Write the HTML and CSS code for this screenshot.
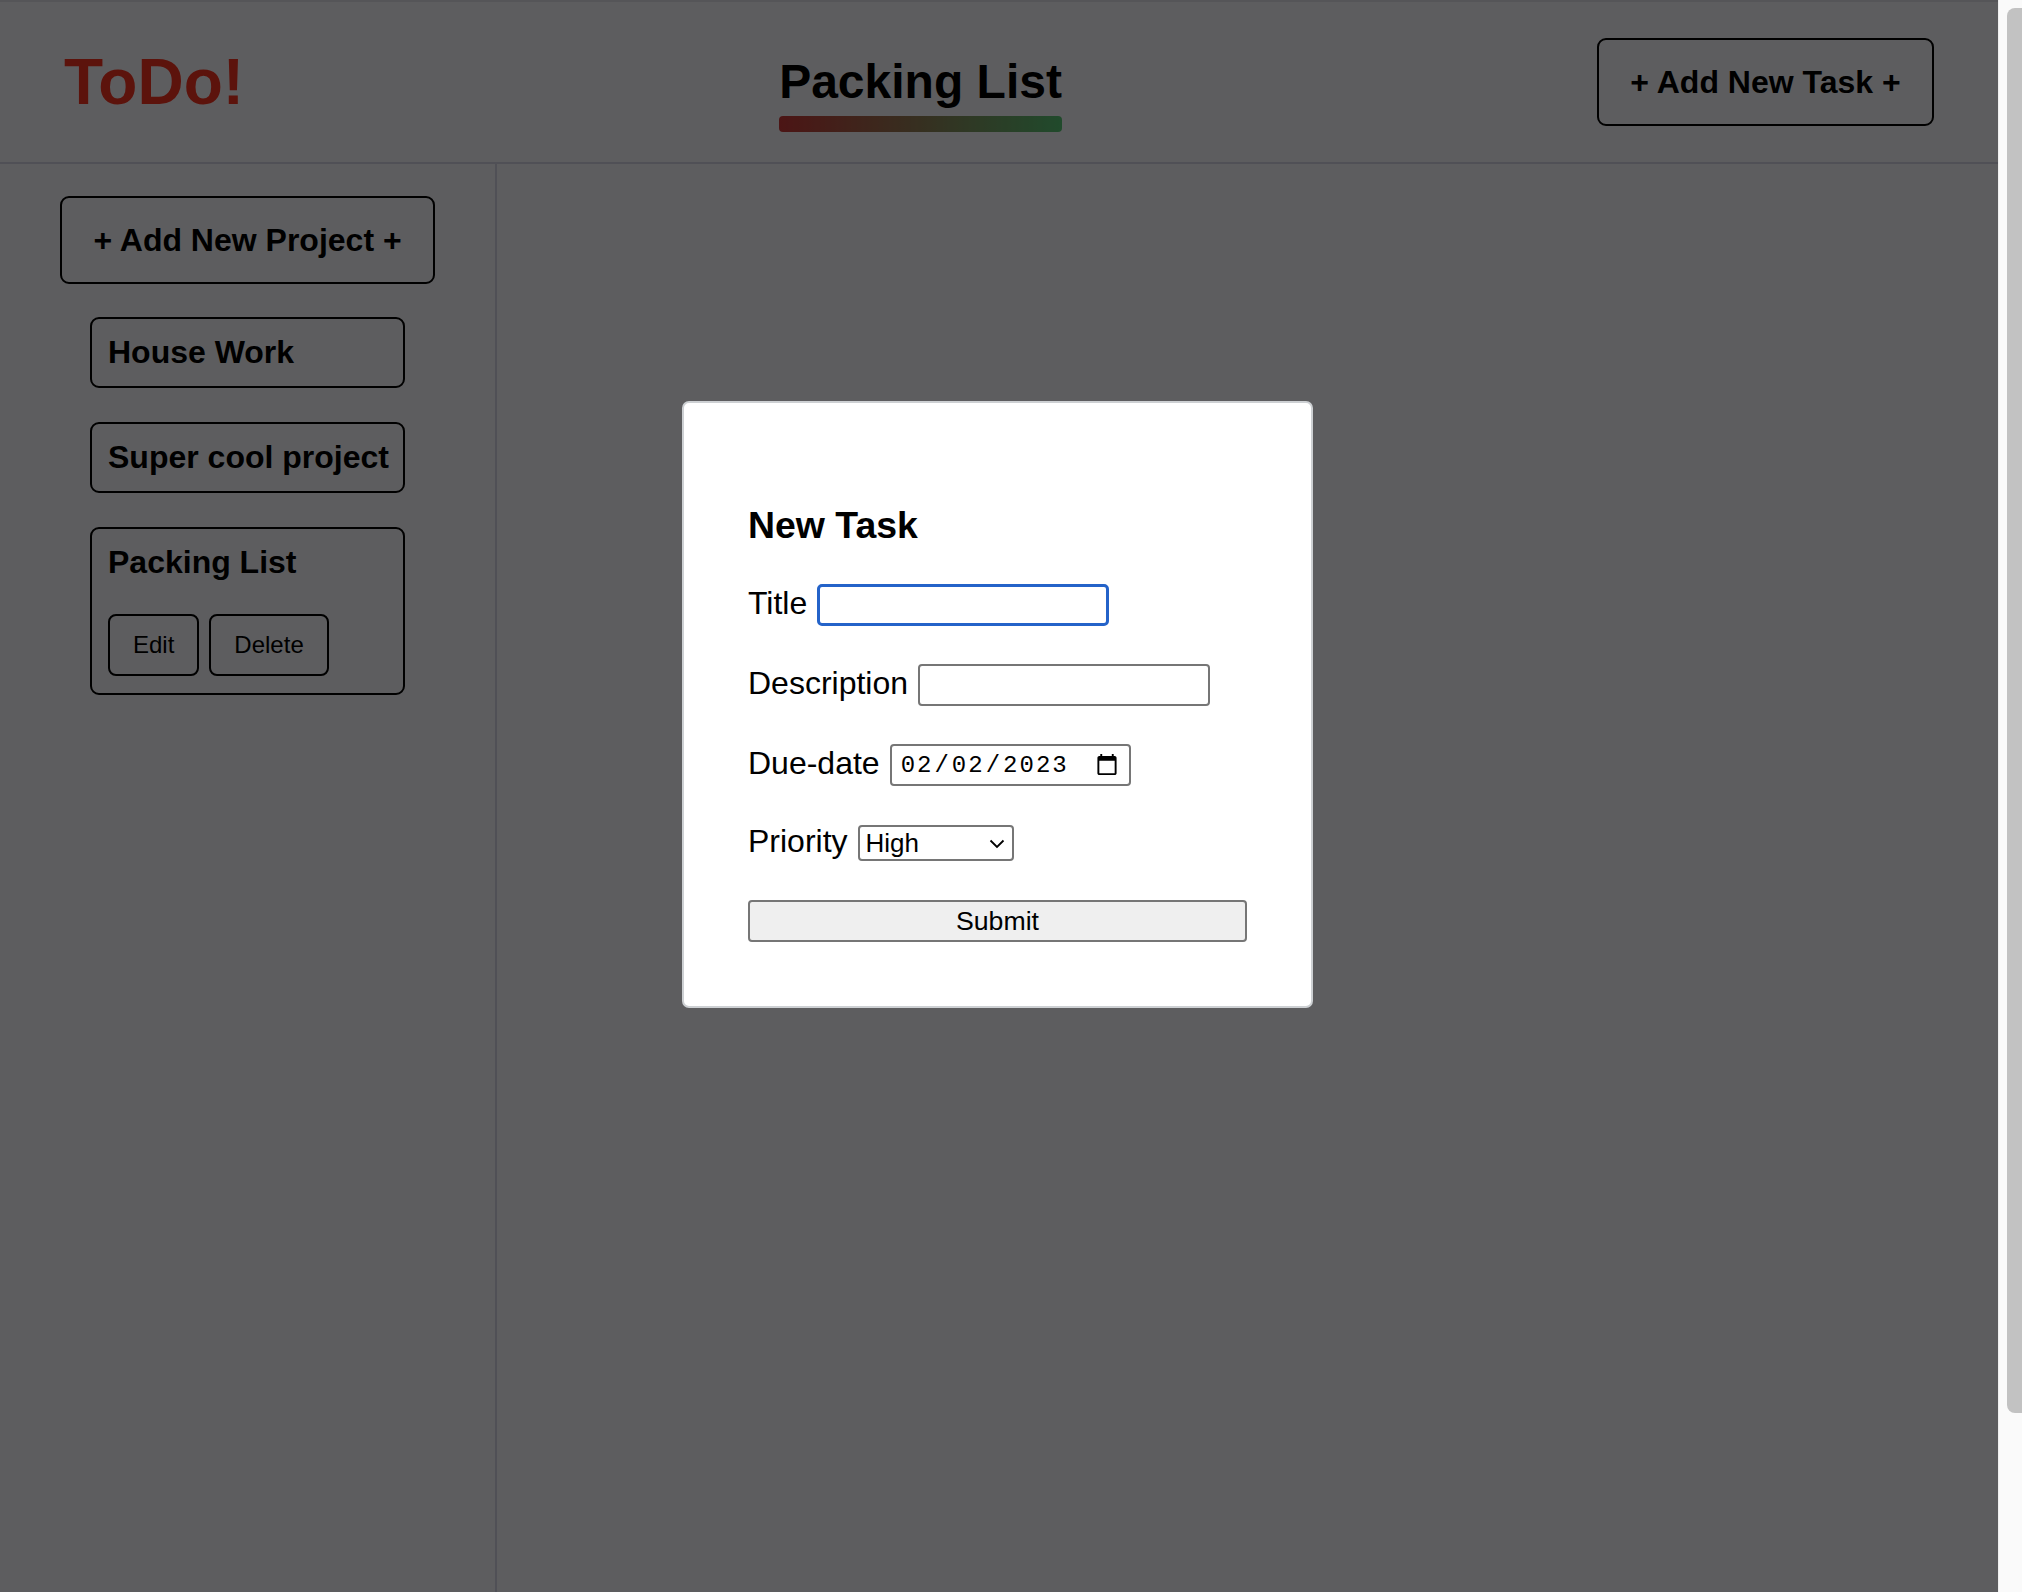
FILE: index.html
```html
<!DOCTYPE html>
<html lang="en">
<head>
    <meta charset="UTF-8">
    <meta name="viewport" content="width=device-width, initial-scale=1.0">
    <title>ToDo!</title>
    <link rel="stylesheet" href="styles.css">
</head>
<body>

    <div class="app">
        <header class="topbar">
            <h1 class="logo">ToDo!</h1>
            <div class="project-title">
                <h2>Packing List</h2>
                <div class="title-bar"></div>
            </div>
            <button class="add-task">+ Add New Task +</button>
        </header>

        <div class="content">
            <aside class="sidebar">
                <button class="add-project">+ Add New Project +</button>
                <div class="project">
                    <h3>House Work</h3>
                </div>
                <div class="project">
                    <h3>Super cool project</h3>
                </div>
                <div class="project active">
                    <h3>Packing List</h3>
                    <div class="project-actions">
                        <button>Edit</button>
                        <button>Delete</button>
                    </div>
                </div>
            </aside>
            <main class="tasks">
                <!-- tasks of the selected project go here -->
            </main>
        </div>

        <!-- New task dialog -->
        <div class="overlay">
            <form class="modal" id="taskForm">
                <h3>New Task</h3>
                <div class="field">
                    <label for="title">Title</label>
                    <input type="text" id="title" class="title-input">
                </div>
                <div class="field">
                    <label for="description">Description</label>
                    <input type="text" id="description" class="desc-input">
                </div>
                <div class="field">
                    <label for="dueDate">Due-date</label>
                    <input type="date" id="dueDate" class="date-input" value="2023-02-02">
                </div>
                <div class="field priority">
                    <label for="priority">Priority</label>
                    <div class="select-wrap">
                        <select id="priority" class="priority-select">
                            <option>High</option>
                            <option>Medium</option>
                            <option>Low</option>
                        </select>
                        <svg class="chevron" width="16" height="10" viewBox="0 0 16 10">
                            <path d="M1.5 1.5 L8 8 L14.5 1.5" fill="none" stroke="#000" stroke-width="1.8"/>
                        </svg>
                    </div>
                </div>
                <button type="button" class="submit">Submit</button>
            </form>
        </div>
    </div>

    <div class="scrollbar">
        <div class="thumb"></div>
    </div>

</body>
</html>
```

FILE: styles.css
```css
html, body {
    height: 100%;
}

body {
    margin: 0;
    display: flex;
    font-family: 'Liberation Sans', Arial, sans-serif;
    background-color: #e9e9ee;
    overflow: hidden;
}

.app {
    position: relative;
    flex: 1;
    display: flex;
    flex-direction: column;
    height: 100%;
}

/* ---------- header ---------- */

.topbar {
    box-sizing: border-box;
    height: 164px;
    display: flex;
    align-items: center;
    justify-content: space-between;
    padding: 0 64px;
    border-top: 2px solid #d4d4dc;
    border-bottom: 2px solid #c8c8d6;
}

.logo {
    margin: 0;
    font-size: 64px;
    font-weight: bold;
    color: #e6301f;
}

.project-title {
    padding-top: 22px;
}

.project-title h2 {
    margin: 0;
    font-size: 48px;
    font-weight: bold;
    color: #000;
}

.title-bar {
    height: 16px;
    margin-top: 7px;
    border-radius: 4px;
    background: linear-gradient(90deg, #bd3535, #52b96e);
}

.add-task,
.add-project {
    font-family: 'Liberation Sans', Arial, sans-serif;
    font-size: 32px;
    font-weight: bold;
    color: #000;
    background: transparent;
    border: 2px solid #000;
    border-radius: 9px;
    cursor: pointer;
}

.add-task {
    width: 337px;
    height: 88px;
}

/* ---------- sidebar ---------- */

.content {
    flex: 1;
    display: flex;
}

.sidebar {
    box-sizing: border-box;
    width: 497px;
    display: flex;
    flex-direction: column;
    align-items: center;
    gap: 34px;
    padding-top: 32px;
    border-right: 2px solid #c8c8d6;
}

.add-project {
    width: 375px;
    height: 88px;
    margin-bottom: -1px;
}

.project {
    box-sizing: border-box;
    width: 315px;
    padding: 15px 16px;
    border: 2px solid #000;
    border-radius: 9px;
}

.project h3 {
    margin: 0;
    font-size: 32px;
    line-height: 37px;
    font-weight: bold;
    color: #000;
    white-space: nowrap;
}

.project-actions {
    display: flex;
    gap: 10px;
    margin-top: 33px;
    margin-bottom: 2px;
}

.project-actions button {
    height: 62px;
    padding: 0 23px;
    font-family: 'Liberation Sans', Arial, sans-serif;
    font-size: 24px;
    color: #000;
    background: transparent;
    border: 2px solid #000;
    border-radius: 8px;
}

.tasks {
    flex: 1;
}

/* ---------- new task dialog ---------- */

.overlay {
    position: absolute;
    inset: 0;
    display: flex;
    justify-content: center;
    align-items: flex-start;
    padding-top: 401px;
    background-color: rgba(0, 0, 0, 0.6);
}

.modal {
    box-sizing: border-box;
    width: 631px;
    padding: 64px;
    background-color: #fff;
    border: 2px solid #cdd0d3;
    border-radius: 7px;
    display: flex;
    flex-direction: column;
    gap: 38px;
    margin-left: -3px;
}

.modal h3 {
    margin: 37px 0 -1px;
    font-size: 37.44px;
    line-height: 43px;
    font-weight: bold;
}

.field {
    display: flex;
    align-items: center;
    gap: 10px;
    height: 42px;
}

.field.priority {
    height: 38px;
}

.field label {
    font-size: 32px;
    margin-bottom: 4px;
    color: #000;
}

.field input,
.field select {
    box-sizing: border-box;
    height: 42px;
    font-family: 'Liberation Sans', Arial, sans-serif;
    font-size: 26px;
    border: 2px solid #767676;
    border-radius: 4px;
    background: #fff;
    color: #000;
    padding: 0 8px;
}

.title-input {
    width: 292px;
    border: 3px solid #2463c9 !important;
    border-radius: 5px !important;
    outline: none;
}

.desc-input {
    width: 292px;
}

.date-input {
    width: 241px;
    font-family: 'Liberation Mono', monospace !important;
    font-size: 24px !important;
    letter-spacing: 2px;
}

.select-wrap {
    position: relative;
    display: flex;
}

.priority-select {
    width: 156px;
    height: 36px !important;
    padding: 0 6px !important;
    appearance: none;
    -webkit-appearance: none;
}

.chevron {
    position: absolute;
    right: 9px;
    top: 14px;
    pointer-events: none;
}

.submit {
    height: 42px;
    width: 100%;
    font-family: 'Liberation Sans', Arial, sans-serif;
    font-size: 26.67px;
    color: #000;
    background-color: #efefef;
    border: 2px solid #767676;
    border-radius: 4px;
}

/* ---------- window scrollbar ---------- */

.scrollbar {
    width: 24px;
    flex-shrink: 0;
    background-color: #fafafa;
    border-left: 1px solid #efefef;
    box-sizing: border-box;
}

.thumb {
    margin: 8px 0 0 8px;
    height: 1405px;
    background-color: #c2c2c2;
    border-radius: 8px 0 0 8px;
}
```
